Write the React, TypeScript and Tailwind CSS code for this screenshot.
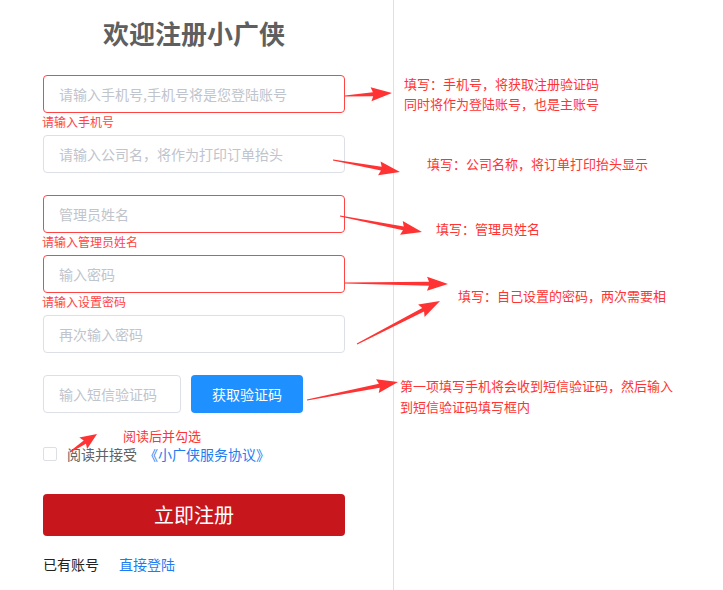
const font = { fontFamily: '"Noto Sans CJK SC", "Noto Sans", sans-serif' };

type Arrow = [number, number, number, number];

const arrows: Arrow[] = [
  [345, 96, 392, 93],
  [333, 160, 400, 172],
  [340, 216, 422, 232],
  [345, 283, 448, 284],
  [357, 344, 440, 301],
  [307, 400, 398, 382],
  [70, 452, 97, 434],
];

function arrowPoints([x1, y1, x2, y2]: Arrow) {
  const dx = x2 - x1;
  const dy = y2 - y1;
  const len = Math.hypot(dx, dy);
  const ux = dx / len;
  const uy = dy / len;
  const nx = -uy;
  const ny = ux;
  const head = Math.min(19, len * 0.45);
  const bx = x2 - ux * head;
  const by = y2 - uy * head;
  const p = (x: number, y: number, w: number) => `${x + nx * w},${y + ny * w}`;
  return [
    p(x1, y1, 0.5),
    p(bx, by, 2),
    p(bx - ux * 2, by - uy * 2, 7),
    `${x2},${y2}`,
    p(bx - ux * 2, by - uy * 2, -7),
    p(bx, by, -2),
    p(x1, y1, -0.5),
  ].join(' ');
}

const Field = ({ placeholder, error }: { placeholder: string; error?: string }) => (
  <div className="h-[60px]">
    <div
      className={`h-[38px] w-[302px] rounded-[4px] border bg-white px-[15px] flex items-center text-[14px] text-[#c0c4cc] ${
        error ? 'border-[#f44]' : 'border-[#dcdfe6]'
      }`}
    >
      {placeholder}
    </div>
    {error && <div className="text-[12px] leading-[18px] text-[#f44] -ml-px">{error}</div>}
  </div>
);

export default function App() {
  return (
    <div className="relative h-[590px] w-[723px] overflow-hidden bg-white" style={font}>
      <div className="h-full w-[394px] border-r border-[#e0e0e0] pl-[43px]">
        <h1 className="w-[302px] pt-[14px] text-center text-[26px] font-bold leading-[38px] text-[#5f5f5f]">
          欢迎注册小广侠
        </h1>
        <div className="mt-[23px]">
          <Field placeholder="请输入手机号,手机号将是您登陆账号" error="请输入手机号" />
          <Field placeholder="请输入公司名，将作为打印订单抬头" />
          <Field placeholder="管理员姓名" error="请输入管理员姓名" />
          <Field placeholder="输入密码" error="请输入设置密码" />
          <Field placeholder="再次输入密码" />
          <div className="flex gap-[10px]">
            <div className="h-[38px] w-[138px] rounded-[4px] border border-[#dcdfe6] px-[15px] flex items-center text-[14px] text-[#c0c4cc]">
              输入短信验证码
            </div>
            <button className="h-[38px] w-[112px] rounded-[4px] bg-[#1e90ff] text-[14px] text-white">
              获取验证码
            </button>
          </div>
          <div className="mt-[34px] flex items-center h-[14px]">
            <span className="h-[14px] w-[14px] rounded-[2px] border border-[#dcdfe6]" />
            <span className="ml-[10px] text-[14px] text-[#606266]">阅读并接受</span>
            <span className="ml-[7px] text-[14px] text-[#1e7cf2]">《小广侠服务协议》</span>
          </div>
          <button className="mt-[33px] h-[42px] w-[302px] rounded-[4px] bg-[#c8161d] text-[20px] text-white">
            立即注册
          </button>
          <div className="mt-[18px] flex text-[14px] leading-[20px]">
            <span className="text-[#222]">已有账号</span>
            <span className="ml-[20px] text-[#1e7cf2]">直接登陆</span>
          </div>
        </div>
      </div>

      <svg className="absolute left-0 top-0" width="723" height="590">
        {arrows.map((a, i) => (
          <polygon key={i} points={arrowPoints(a)} fill="#f33" />
        ))}
      </svg>

      <div className="absolute left-[404px] top-[74px] text-[13px] leading-[20px] text-[#f33]">
        <div>填写：手机号，将获取注册验证码</div>
        <div>同时将作为登陆账号，也是主账号</div>
      </div>
      <div className="absolute left-[427px] top-[154px] text-[13px] leading-[20px] text-[#f33]">
        填写：公司名称，将订单打印抬头显示
      </div>
      <div className="absolute left-[436px] top-[219px] text-[13px] leading-[20px] text-[#f33]">
        填写：管理员姓名
      </div>
      <div className="absolute left-[458px] top-[286px] text-[13px] leading-[20px] text-[#f33]">
        填写：自己设置的密码，两次需要相
      </div>
      <div className="absolute left-[400px] top-[375px] text-[13px] leading-[21px] text-[#f33]">
        <div>第一项填写手机将会收到短信验证码，然后输入</div>
        <div>到短信验证码填写框内</div>
      </div>
      <div className="absolute left-[123px] top-[426px] text-[13px] leading-[20px] text-[#f33]">
        阅读后并勾选
      </div>
    </div>
  );
}
